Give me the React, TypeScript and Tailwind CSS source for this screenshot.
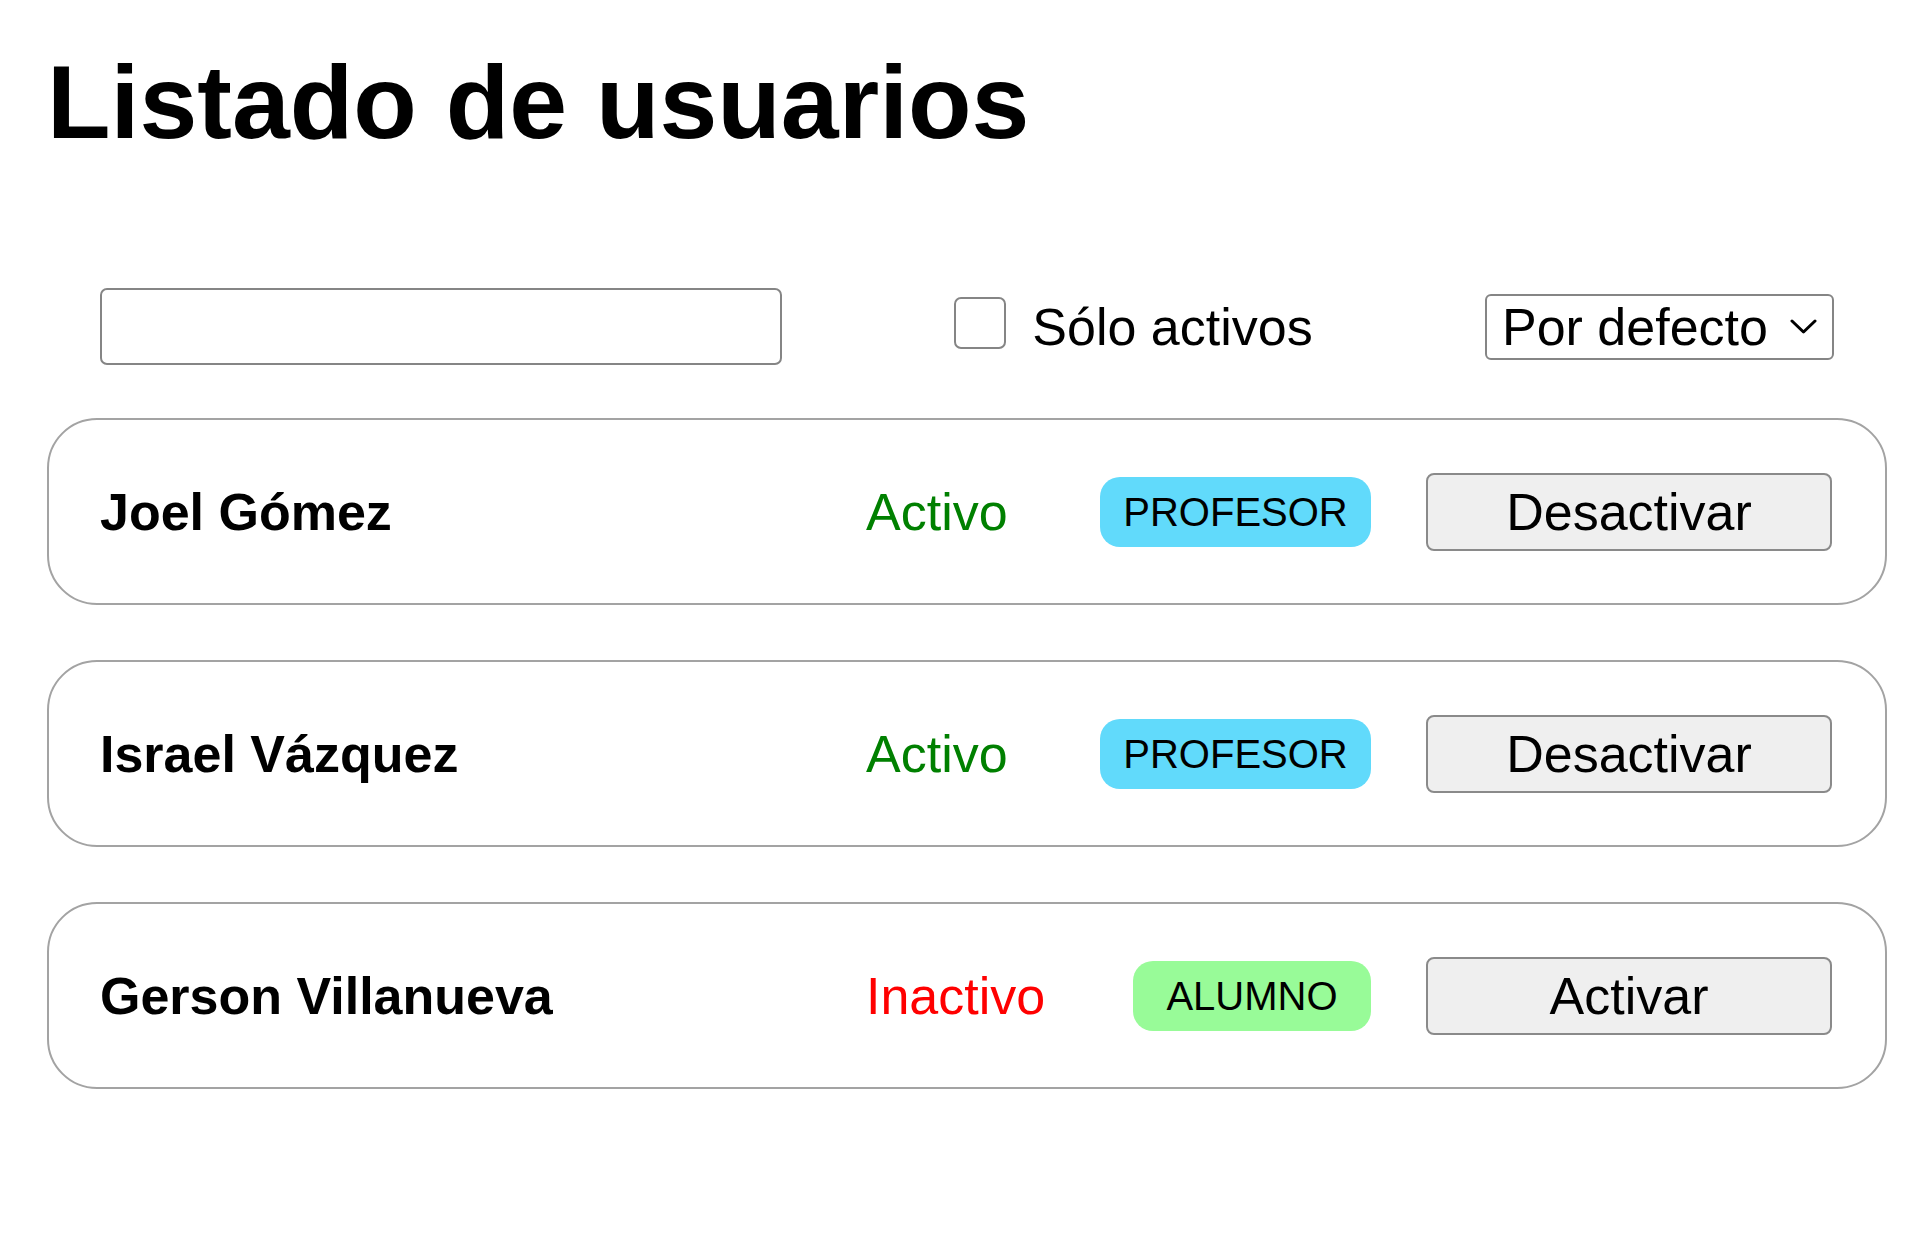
import React, { useState } from 'react';

type Usuario = {
  id: number;
  nombre: string;
  activo: boolean;
  rol: 'PROFESOR' | 'ALUMNO';
};

const usuariosIniciales: Usuario[] = [
  { id: 1, nombre: 'Joel Gómez', activo: true, rol: 'PROFESOR' },
  { id: 2, nombre: 'Israel Vázquez', activo: true, rol: 'PROFESOR' },
  { id: 3, nombre: 'Gerson Villanueva', activo: false, rol: 'ALUMNO' },
];

const UsuarioCard = ({ usuario, onToggle }: { usuario: Usuario; onToggle: (id: number) => void }) => {
  return (
    <div className="flex items-center h-[187px] border-2 border-[#a3a3a3] rounded-[50px] pl-[51px] pr-[53px]">
      <div className="flex-1 min-w-0 text-[52px] font-bold text-black leading-none whitespace-nowrap">
        {usuario.nombre}
      </div>
      <div className={`w-[234px] text-[52px] leading-none ${usuario.activo ? 'text-[#008000]' : 'text-[#ff0000]'}`}>
        {usuario.activo ? 'Activo' : 'Inactivo'}
      </div>
      <div className="w-[271px] flex justify-end">
        <span
          className={`h-[70px] min-w-[238px] px-[26px] flex items-center justify-center rounded-[20px] text-[40px] text-black leading-none ${
            usuario.rol === 'PROFESOR' ? 'bg-[#61dafb]' : 'bg-[#98fb98]'
          }`}
        >
          {usuario.rol}
        </span>
      </div>
      <button
        onClick={() => onToggle(usuario.id)}
        className="ml-[55px] w-[406px] h-[78px] bg-[#efefef] border-2 border-[#8a8a8a] rounded-[8px] text-[52px] text-black leading-none"
      >
        {usuario.activo ? 'Desactivar' : 'Activar'}
      </button>
    </div>
  );
};

const App = () => {
  const [usuarios, setUsuarios] = useState<Usuario[]>(usuariosIniciales);
  const [busqueda, setBusqueda] = useState('');
  const [soloActivos, setSoloActivos] = useState(false);
  const [orden, setOrden] = useState('defecto');

  const handleToggle = (id: number) => {
    setUsuarios(prev => prev.map(u => (u.id === id ? { ...u, activo: !u.activo } : u)));
  };

  return (
    <div className="min-h-screen bg-white text-black font-['Liberation_Sans',Arial,sans-serif] pl-[47px] pr-[33px]">
      <h1 className="pt-[50px] text-[104px] leading-[104px] font-bold">Listado de usuarios</h1>

      <div className="mt-[134px] h-[77px] px-[53px] flex items-center justify-between">
        <input
          type="text"
          value={busqueda}
          onChange={e => setBusqueda(e.target.value)}
          className="w-[682px] h-[77px] border-2 border-[#858585] rounded-[7px] px-3 text-[52px] outline-none"
        />
        <label className="flex items-center gap-[26px] text-[52px] leading-none cursor-pointer">
          <input
            type="checkbox"
            checked={soloActivos}
            onChange={e => setSoloActivos(e.target.checked)}
            className="appearance-none w-[52px] h-[52px] mb-[8px] border-2 border-[#858585] rounded-[7px] bg-white checked:bg-[#0075ff]"
          />
          Sólo activos
        </label>
        <div className="relative w-[349px] h-[66px]">
          <select
            value={orden}
            onChange={e => setOrden(e.target.value)}
            className="appearance-none w-full h-full border-2 border-[#858585] rounded-[6px] bg-white pl-[15px] text-[52px] leading-none text-black outline-none"
          >
            <option value="defecto">Por defecto</option>
            <option value="nombre">Nombre</option>
            <option value="rol">Rol</option>
          </select>
          <svg
            className="absolute right-[17px] top-[25px] pointer-events-none"
            width="27"
            height="15"
            viewBox="0 0 27 15"
            fill="none"
          >
            <polyline points="2,2 13.5,13 25,2" stroke="#000" strokeWidth="3" strokeLinecap="round" strokeLinejoin="round" />
          </svg>
        </div>
      </div>

      <div className="mt-[53px] flex flex-col gap-[55px]">
        {usuarios.map(u => (
          <UsuarioCard key={u.id} usuario={u} onToggle={handleToggle} />
        ))}
      </div>
    </div>
  );
};

export default App;
